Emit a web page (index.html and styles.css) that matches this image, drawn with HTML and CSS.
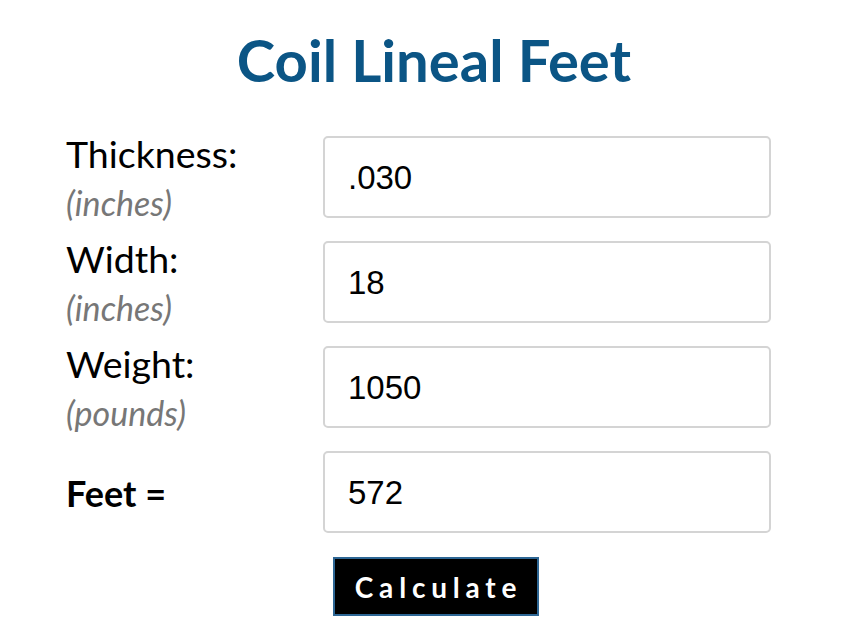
FILE: index.html
```html
<!DOCTYPE html>
<html lang="en">
<head>
    <meta charset="UTF-8">
    <meta name="viewport" content="width=device-width, initial-scale=1.0">
    <title>Coil Lineal Feet</title>
    <link rel="stylesheet" href="styles.css">
</head>
<body>

    <h1>Coil Lineal Feet</h1>

    <form class="calc" id="coilForm">
        <label class="field-label" for="thickness">Thickness:<span class="unit">(inches)</span></label>
        <input class="field" type="text" id="thickness" value=".030">

        <label class="field-label" for="width">Width:<span class="unit">(inches)</span></label>
        <input class="field" type="text" id="width" value="18">

        <label class="field-label" for="weight">Weight:<span class="unit">(pounds)</span></label>
        <input class="field" type="text" id="weight" value="1050">

        <label class="field-label result-label" for="feet">Feet =</label>
        <input class="field" type="text" id="feet" value="572" readonly>
    </form>

    <div class="actions">
        <button type="button" id="calcButton">Calculate</button>
    </div>

</body>
</html>
```

FILE: styles.css
```css
body { margin: 0; font-family: "Lato", "Liberation Sans", sans-serif; background: #fff; color: #000; }

h1 { margin: 25px 0 42px; text-align: center; font-size: 58px; font-weight: 700; line-height: normal; color: #0b5585; }

.calc { width: 736px; margin: 0 auto; display: grid; grid-template-columns: 257px 448px; grid-auto-rows: 82px; row-gap: 23px; }

.field-label { display: block; padding-top: 2px; font-size: 37.5px; line-height: 32px; }
.unit { display: block; margin-top: 13px; font-size: 34px; line-height: 40px; font-style: italic; color: #777; }
.result-label { align-self: center; padding-top: 2px; font-weight: 700; font-size: 36px; line-height: 40px; }

.field { box-sizing: border-box; width: 448px; height: 82px; padding: 2px 0 0 23px; border: 2px solid #d4d4d4; border-radius: 5px;
         font-family: "Liberation Sans", Arial, sans-serif; font-size: 33px; color: #000; background: #fff; outline: none; }

.actions { display: flex; justify-content: center; margin-top: 24px; padding-left: 4px; }
.actions button { height: 59px; padding: 0 15px 0 20px; border: 2px solid #2d6694; background: #000; color: #fff; cursor: pointer;
                  font-family: "Lato", sans-serif; font-size: 28px; font-weight: 700; letter-spacing: 5.8px; }
```
